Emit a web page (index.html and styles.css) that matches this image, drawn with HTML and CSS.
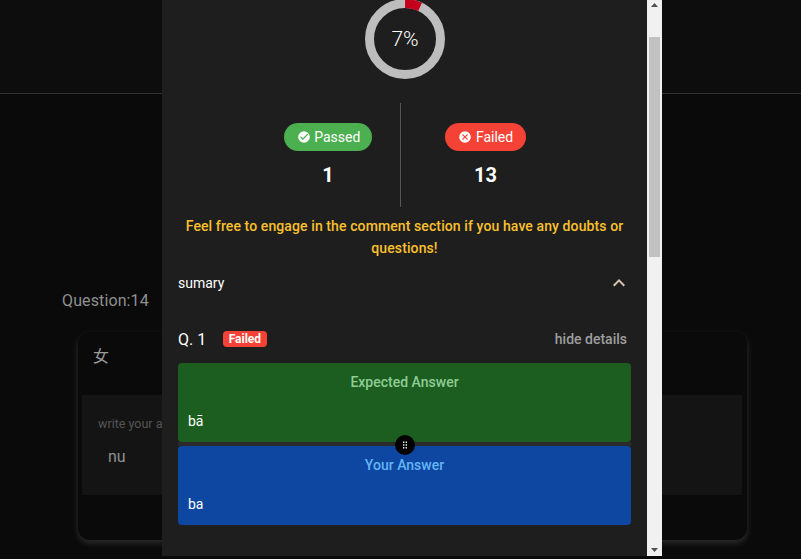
FILE: index.html
```html
<!DOCTYPE html>
<html lang="en">
<head>
<meta charset="utf-8">
<title>Quiz result</title>
<link rel="stylesheet" href="styles.css">
</head>
<body>
<div class="page">
  <header class="topbar"></header>
  <main class="quiz">
    <div class="q-label">Question:14</div>
    <section class="q-card">
      <div class="q-char">女</div>
      <div class="q-input">
        <div class="q-hint">write your answer</div>
        <div class="q-value">nu</div>
      </div>
    </section>
  </main>
</div>
<div class="modal">
  <div class="modal-body">
    <div class="ring">
      <svg class="ring-svg" width="80" height="80" viewBox="0 0 80 80">
        <circle class="ring-track" cx="40" cy="40" r="35.5"/>
        <circle class="ring-value" cx="40" cy="40" r="35.5" pathLength="100" stroke-dasharray="7 93" transform="rotate(-90 40 40)"/>
      </svg>
      <span class="ring-text">7%</span>
    </div>
    <div class="stats">
      <div class="stat stat-left">
        <div class="chip chip-pass">
          <svg class="chip-icon" viewBox="0 0 24 24"><path fill="currentColor" d="M12 2a10 10 0 1 0 0 20 10 10 0 0 0 0-20zm-2 15-5-5 1.41-1.41L10 14.17l7.59-7.59L19 8l-9 9z"/></svg>
          <span>Passed</span>
        </div>
        <div class="stat-num">1</div>
      </div>
      <div class="stat-sep"></div>
      <div class="stat stat-right">
        <div class="chip chip-fail">
          <svg class="chip-icon" viewBox="0 0 24 24"><path fill="currentColor" d="M12 2a10 10 0 1 0 0 20 10 10 0 0 0 0-20zm5 13.59L15.59 17 12 13.41 8.41 17 7 15.59 10.59 12 7 8.41 8.41 7 12 10.59 15.59 7 17 8.41 13.41 12 17 15.59z"/></svg>
          <span>Failed</span>
        </div>
        <div class="stat-num">13</div>
      </div>
    </div>
    <p class="note">Feel free to engage in the comment section if you have any doubts or questions!</p>
    <div class="summary">
      <span>sumary</span>
      <svg class="chev" width="24" height="24" viewBox="0 0 24 24"><path fill="currentColor" d="M12 8l-6 6 1.41 1.41L12 10.83l4.59 4.58L18 14z"/></svg>
    </div>
    <div class="q-row">
      <span class="q-no">Q. 1</span>
      <span class="badge">Failed</span>
      <span class="hide">hide details</span>
    </div>
    <div class="answers">
      <div class="ans ans-exp">
        <div class="ans-title">Expected Answer</div>
        <div class="ans-text">bā</div>
      </div>
      <div class="split">
        <span class="handle">
          <svg width="6" height="8" viewBox="0 0 6 8"><g fill="#fff"><rect x="1" y="0.5" width="1.4" height="1.4"/><rect x="3.6" y="0.5" width="1.4" height="1.4"/><rect x="1" y="3.3" width="1.4" height="1.4"/><rect x="3.6" y="3.3" width="1.4" height="1.4"/><rect x="1" y="6.1" width="1.4" height="1.4"/><rect x="3.6" y="6.1" width="1.4" height="1.4"/></g></svg>
        </span>
      </div>
      <div class="ans ans-you">
        <div class="ans-title">Your Answer</div>
        <div class="ans-text">ba</div>
      </div>
    </div>
  </div>
  <div class="scrollbar">
    <svg class="arrow" width="15" height="13" viewBox="0 0 15 13"><path fill="#505050" d="M7.5 3 11 7H4z"/></svg>
    <div class="track"><div class="thumb"></div></div>
    <svg class="arrow" width="15" height="13" viewBox="0 0 15 13"><path fill="#505050" d="M4 5h7l-3.5 4z"/></svg>
  </div>
</div>
</body>
</html>
```
FILE: styles.css
```css
* { box-sizing: border-box; }
html, body { margin: 0; height: 100%; overflow: hidden; }
body {
  background: #0a0a0a;
  color: #fff;
  font-family: Roboto, "Noto Sans CJK SC", sans-serif;
}
.page { height: 559px; display: flex; flex-direction: column; }
.topbar { height: 94px; flex: none; background: #0d0d0d; border-bottom: 1px solid #333; }
.quiz { padding: 197px 54px 0 62px; }
.q-label { font-size: 16px; line-height: 20px; color: #909090; letter-spacing: 0.12px; }
.q-card {
  margin: 21px 0 0 16px;
  height: 208px;
  background: #0a0a0a;
  border-radius: 12px;
  box-shadow: 0 3px 7px rgba(255, 255, 255, 0.14);
  padding: 15px 5px 0 4px;
}
.q-char { font-size: 16px; line-height: 20px; color: #9a9a9a; padding-left: 11px; height: 48px; }
.q-input { height: 100px; background: #141414; padding: 20px 16px 0; }
.q-hint { font-size: 12.5px; line-height: 18px; color: #555; }
.q-value { font-size: 16px; line-height: 20px; color: #8f8f8f; margin: 14px 0 0 10px; }

.modal {
  position: absolute;
  left: 162px;
  top: 0;
  width: 500px;
  height: 556px;
  background: #1e1e1e;
  display: flex;
  overflow: hidden;
}
.modal-body { flex: 1; min-width: 0; padding: 0 16px; }
.ring { position: relative; width: 80px; height: 80px; margin: -1px auto 0; left: 0.5px; }
.ring-svg { display: block; }
.ring-track, .ring-value { fill: none; stroke-width: 9; }
.ring-track { stroke: #bdbdbd; }
.ring-value { stroke: #c4001d; }
.ring-text {
  position: absolute;
  inset: 0;
  display: flex;
  align-items: center;
  justify-content: center;
  font-size: 21px;
  font-weight: 350;
  color: #fff;
}
.stats { display: flex; justify-content: center; margin-top: 24px; height: 104px; padding-left: 17px; }
.stat { display: flex; flex-direction: column; align-items: center; padding-top: 20px; }
.stat-left { width: 144px; }
.stat-right { width: 169px; }
.stat-sep { width: 1px; background: #555; flex: none; }
.chip {
  height: 28px;
  border-radius: 14px;
  display: flex;
  align-items: center;
  gap: 4px;
  padding: 0 12px 0 13px;
  font-size: 14px;
  color: #fff;
}
.chip-pass { background: #4caf50; padding: 0 12px 0 13px; gap: 3.5px; }
.chip-fail { background: #f44336; padding-right: 13px; }
.chip-icon { width: 14px; height: 14px; flex: none; }
.stat-num { font-size: 20px; font-weight: 700; line-height: 24px; margin-top: 12px; }
.note {
  margin: 8px 0 0;
  text-align: center;
  font-size: 14px;
  font-weight: 500;
  letter-spacing: 0.1px;
  line-height: 22px;
  color: #fbc02d;
}
.summary {
  display: flex;
  justify-content: space-between;
  align-items: center;
  height: 24px;
  margin-top: 12px;
  font-size: 14px;
}
.chev { color: #d8c6b4; }
.q-row { display: flex; align-items: center; height: 24px; margin-top: 32px; padding-right: 4px; }
.q-no { font-size: 16px; }
.badge {
  margin-left: 17px;
  background: #f44336;
  border-radius: 4px;
  font-size: 12px;
  font-weight: 700;
  line-height: 16px;
  padding: 0 5.5px;
}
.hide { margin-left: auto; font-size: 14px; font-weight: 500; color: #9e9e9e; }
.answers { margin-top: 12px; }
.ans { height: 79px; border-radius: 4px; padding: 10px 10px 0; font-size: 14px; }
.ans-exp { background: #1b5e20; }
.ans-you { background: #0d47a1; }
.ans-title { text-align: center; font-weight: 500; line-height: 18px; }
.ans-exp .ans-title { color: #90cc94; }
.ans-you .ans-title { color: #64b5f6; }
.ans-text { margin-top: 20px; line-height: 20px; color: #fff; }
.split { height: 4px; background: #2b2b2b; display: flex; align-items: center; justify-content: center; }
.handle {
  flex: none;
  width: 20px;
  height: 20px;
  border-radius: 50%;
  background: #000;
  display: flex;
  align-items: center;
  justify-content: center;
  position: relative;
  top: 1px;
}
.scrollbar { width: 15px; flex: none; background: #f1f1f1; display: flex; flex-direction: column; }
.arrow { display: block; flex: none; }
.track { flex: 1; padding-top: 24px; }
.thumb { height: 220px; margin: 0 2px; background: #c1c1c1; }
```
